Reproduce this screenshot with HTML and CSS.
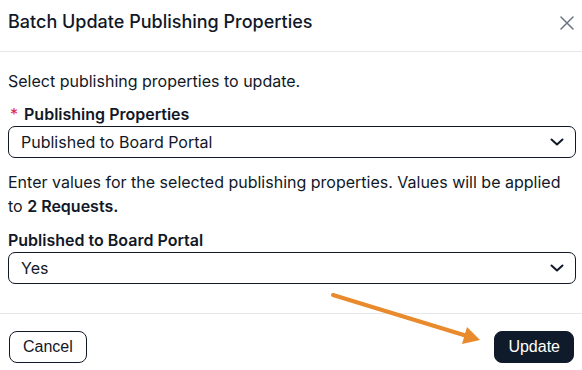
FILE: index.html
```html
<!DOCTYPE html>
<html lang="en">
<head>
  <meta charset="UTF-8" />
  <title>Batch Update Publishing Properties</title>
  <link rel="stylesheet" href="styles.css">
</head>
<body>
  <div class="modal">
    <div class="modal-header">
      <h2 class="modal-title">Batch Update Publishing Properties</h2>
      <button class="close-btn" aria-label="Close">
        <svg width="14" height="14" viewBox="0 0 14 14"><path d="M1 1L13 13M13 1L1 13" stroke="#6b7280" stroke-width="1.5" stroke-linecap="round"/></svg>
      </button>
    </div>

    <div class="modal-body">
      <p class="intro">Select publishing properties to update.</p>

      <label class="field-label"><span class="required">*</span> Publishing Properties</label>
      <div class="select">
        <span>Published to Board Portal</span>
        <svg class="chevron" width="14" height="8" viewBox="0 0 14 8"><path d="M1.5 1.5L7 6.5L12.5 1.5" fill="none" stroke="#111827" stroke-width="2" stroke-linecap="round" stroke-linejoin="round"/></svg>
      </div>

      <p class="info">Enter values for the selected publishing properties. Values will be applied to <strong>2 Requests.</strong></p>

      <label class="field-label">Published to Board Portal</label>
      <div class="select">
        <span>Yes</span>
        <svg class="chevron" width="14" height="8" viewBox="0 0 14 8"><path d="M1.5 1.5L7 6.5L12.5 1.5" fill="none" stroke="#111827" stroke-width="2" stroke-linecap="round" stroke-linejoin="round"/></svg>
      </div>
    </div>

    <div class="modal-footer">
      <button class="btn btn-cancel">Cancel</button>
      <button class="btn btn-update">Update</button>
    </div>
  </div>

  <!-- annotation arrow pointing at the Update button -->
  <svg class="arrow" width="582" height="370" viewBox="0 0 582 370">
    <line x1="333" y1="295" x2="467" y2="336" stroke="#e98a2c" stroke-width="4" stroke-linecap="round"/>
    <polygon points="480,340 467,327 462,344" fill="#e98a2c"/>
  </svg>
</body>
</html>
```

FILE: styles.css
```css
body {
  margin: 0;
  font-family: Inter, "Noto Sans", sans-serif;
  color: #111827;
  background: #ffffff;
}

.modal {
  width: 582px;
}

.modal-header {
  height: 52px;
  display: flex;
  justify-content: space-between;
  align-items: flex-start;
  padding: 10px 8px 0 8px;
  box-sizing: border-box;
  border-bottom: 1px solid #e5e7eb;
}

.modal-title {
  margin: 0;
  font-size: 18px;
  font-weight: 500;
  line-height: 24px;
  color: #111827;
}

.close-btn {
  border: none;
  background: none;
  padding: 0;
  margin: 6px 0 0 0;
  width: 14px;
  height: 14px;
  cursor: pointer;
}

.modal-body {
  padding: 17px 6px 29px 8px;
  font-size: 16px;
  line-height: 24px;
}

.intro {
  margin: 0 0 9px;
}

.field-label {
  display: block;
  font-weight: 600;
}

.required {
  color: #e11d48;
  font-weight: 400;
  margin: 0 2px 0 2px;
}

.select {
  height: 32px;
  box-sizing: border-box;
  border: 1px solid #111827;
  border-radius: 7px;
  display: flex;
  align-items: center;
  justify-content: space-between;
  padding: 0 11px 0 12px;
}

.chevron {
  display: block;
}

.info {
  margin: 12px 0 10px;
}

.info strong {
  font-weight: 600;
}

.modal-footer {
  display: flex;
  justify-content: space-between;
  padding: 17px 8px 8px 9px;
  border-top: 1px solid #e5e7eb;
}

.btn {
  height: 32px;
  font-family: "Liberation Sans", Arial, sans-serif;
  font-size: 16px;
  border-radius: 8px;
  padding: 0 13px;
  cursor: pointer;
}

.btn-cancel {
  background: #ffffff;
  color: #111827;
  border: 1px solid #111827;
}

.btn-update {
  background: #0f1b2a;
  color: #ffffff;
  border: 1px solid #0f1b2a;
}

.arrow {
  position: absolute;
  top: 0;
  left: 0;
  pointer-events: none;
}
```
